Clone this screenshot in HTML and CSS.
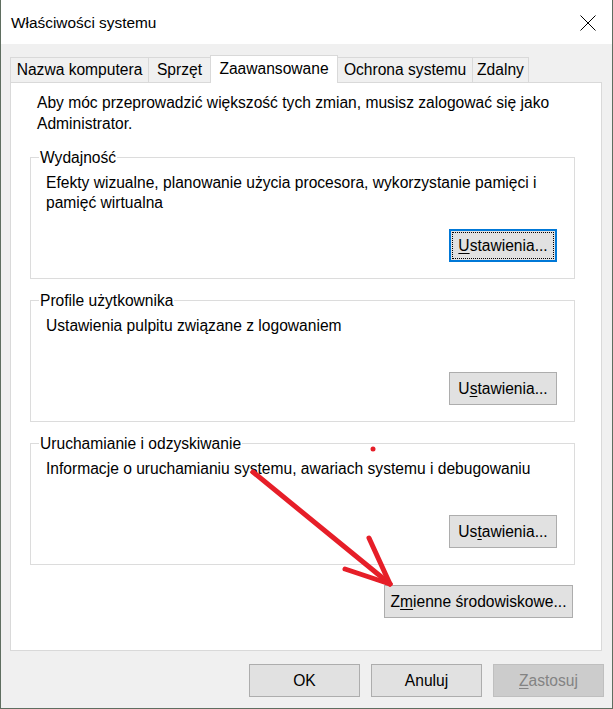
FILE: index.html
```html
<!DOCTYPE html>
<html lang="pl">
<head>
<meta charset="utf-8">
<title>Właściwości systemu</title>
<link rel="stylesheet" href="styles.css">
</head>
<body>
<div class="window">
  <div class="titlebar">
    <span class="title">Właściwości systemu</span>
    <svg class="close" width="16" height="16" viewBox="0 0 16 16"><path d="M0.5 0.5 L15.5 15.5 M15.5 0.5 L0.5 15.5" stroke="#000" stroke-width="1" fill="none"/></svg>
  </div>
  <div class="body">
    <div class="tabs">
      <div class="tab t1">Nazwa komputera</div>
      <div class="tab t2">Sprzęt</div>
      <div class="tab active">Zaawansowane</div>
      <div class="tab t4">Ochrona systemu</div>
      <div class="tab t5">Zdalny</div>
    </div>
    <div class="panel">
      <p class="intro">Aby móc przeprowadzić większość tych zmian, musisz zalogować się jako Administrator.</p>
      <fieldset class="group">
        <legend>Wydajność</legend>
        <div class="group-body">
          <p class="desc">Efekty wizualne, planowanie użycia procesora, wykorzystanie pamięci i pamięć wirtualna</p>
          <div class="row"><button class="btn focused"><u>U</u>stawienia...</button></div>
        </div>
      </fieldset>
      <fieldset class="group">
        <legend>Profile użytkownika</legend>
        <div class="group-body">
          <p class="desc">Ustawienia pulpitu związane z logowaniem</p>
          <div class="row"><button class="btn">U<u>s</u>tawienia...</button></div>
        </div>
      </fieldset>
      <fieldset class="group">
        <legend>Uruchamianie i odzyskiwanie</legend>
        <div class="group-body">
          <p class="desc">Informacje o uruchamianiu systemu, awariach systemu i debugowaniu</p>
          <div class="row"><button class="btn">Us<u>t</u>awienia...</button></div>
        </div>
      </fieldset>
      <div class="env"><button class="btn wide">Z<u>m</u>ienne środowiskowe...</button></div>
    </div>
    <div class="footer">
      <button class="btn dlg">OK</button>
      <button class="btn dlg">Anuluj</button>
      <button class="btn dlg disabled"><u>Z</u>astosuj</button>
    </div>
  </div>
  <svg class="annot" width="613" height="709" viewBox="0 0 613 709">
    <g stroke="#e61e28" stroke-width="5" stroke-linecap="round" fill="none">
      <path d="M253 472 L390 584"/>
      <path d="M369 538 L390 584"/>
      <path d="M345 569 L390 584"/>
    </g>
    <circle cx="373" cy="449" r="2.5" fill="#e61e28"/>
  </svg>
</div>
</body>
</html>
```
FILE: styles.css
```css
* { box-sizing: border-box; }
html, body { margin: 0; padding: 0; background: #f0f0f0; }
body {
  font-family: "Liberation Sans", Arial, sans-serif;
  font-size: 15.6px;
  color: #000;
}
.window {
  position: relative;
  width: 613px;
  height: 709px;
  border: 1px solid #5f6e60;
  border-top: none;
  background: #f0f0f0;
  display: flex;
  flex-direction: column;
}
.titlebar {
  height: 44px;
  background: #fff;
  display: flex;
  align-items: center;
  justify-content: space-between;
  padding: 0 16px 0 10px;
}
.title { font-size: 15.4px; padding-top: 1px; }
.close { margin-top: 1px; }
.body {
  flex: 1;
  display: flex;
  flex-direction: column;
  padding: 11px 0 0 9px;
}
.tabs {
  display: flex;
  align-items: flex-end;
  height: 27px;
  position: relative;
  z-index: 1;
}
.tab {
  height: 25px;
  border: 1px solid #d9d9d9;
  border-bottom: none;
  background: #f0f0f0;
  padding: 2px 0 0;
  text-align: center;
  line-height: 20px;
  margin-right: -1px;
}
.t1 { width: 139px; }
.t2 { width: 63px; }
.t4 { width: 136px; }
.t5 { width: 57px; }
.tab.active {
  width: 128px;
  height: 28px;
  background: #fff;
  margin-bottom: -1px;
  padding-top: 3px;
}
.panel {
  width: 592px;
  height: 569px;
  background: #fff;
  border: 1px solid #d9d9d9;
  padding: 9px 26px 0 19px;
  display: flex;
  flex-direction: column;
}
.intro {
  margin: 0 0 15px 7px;
  line-height: 21px;
}
.group {
  margin: 0 0 13px;
  height: 130px;
  border: 1px solid #dcdcdc;
  padding: 0 17px 0 15px;
  min-width: 0;
}
.group legend {
  padding: 0 1px;
  margin-left: -7px;
  line-height: 17px;
}
.group-body {
  height: 96px;
  display: flex;
  flex-direction: column;
}
.desc {
  margin: 7px 0 0;
  line-height: 20px;
}
.row {
  margin-top: auto;
  display: flex;
  justify-content: flex-end;
}
.btn {
  font-family: inherit;
  font-size: 15.6px;
  color: #000;
  background: #e1e1e1;
  border: 1px solid #adadad;
  height: 33px;
  width: 108px;
  padding: 0;
  margin: 0;
}
.btn u { text-underline-offset: 2px; }
.btn.focused {
  border: 2px solid #0078d7;
  outline: 1px dotted #000;
  outline-offset: -4px;
}
.env {
  display: flex;
  justify-content: flex-end;
  margin-top: 7px;
}
.btn.wide { width: 189px; margin-right: 2px; }
.footer {
  display: flex;
  justify-content: flex-end;
  gap: 11px;
  padding: 13px 8px 0 0;
}
.btn.dlg { width: 111px; }
.btn.disabled {
  background: #cccccc;
  border-color: #bfbfbf;
  color: #838383;
}
.annot {
  position: absolute;
  left: -1px;
  top: 0;
  pointer-events: none;
}
```
